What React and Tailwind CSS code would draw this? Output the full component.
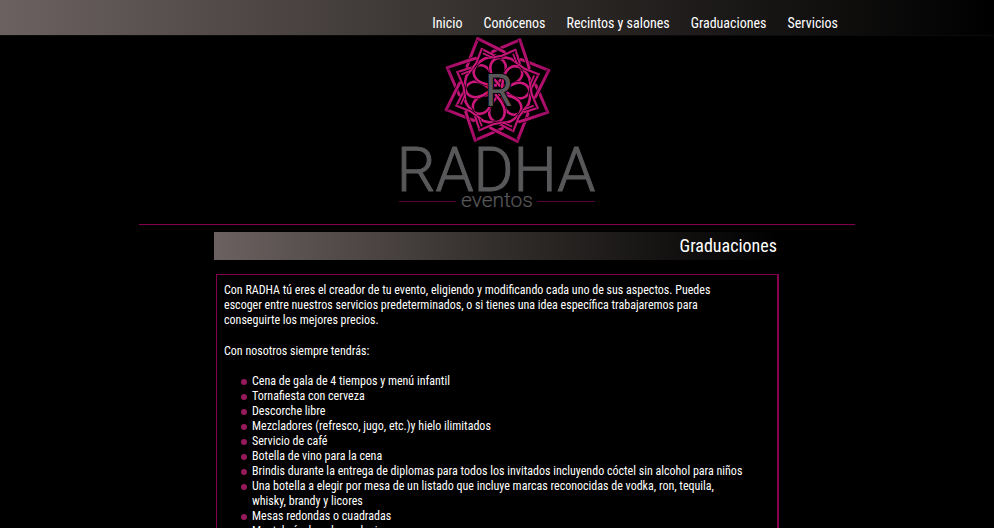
const nav = ["Inicio", "Conócenos", "Recintos y salones", "Graduaciones", "Servicios"];

const perks = [
  "Cena de gala de 4 tiempos y menú infantil",
  "Tornafiesta con cerveza",
  "Descorche libre",
  "Mezcladores (refresco, jugo, etc.)y hielo ilimitados",
  "Servicio de café",
  "Botella de vino para la cena",
  "Brindis durante la entrega de diplomas para todos los invitados incluyendo cóctel sin alcohol para niños",
  "Una botella a elegir por mesa de un listado que incluye marcas reconocidas de vodka, ron, tequila, whisky, brandy y licores",
  "Mesas redondas o cuadradas",
  "Mantelería de color a elegir",
];

const turns = [24, 69, 114, 159, 204, 249, 294, 339];

// Each ray of the knot has its point on the negative y axis and is mirrored across it.
const rim = "M0 -55 L15.6 -38 L20 -33";
const inner = "M0 -44 L10 -33 L16 -29";
const chevron = "M0 -39 L5 -34";
const petal = "M0 -34 C10 -33 17 -28 16.500 -21 C16 -13 7 -8 0 -5";

function Strand({ d, width, mirrored }) {
  return turns.map((t) => (
    <g key={t} transform={mirrored ? `rotate(${t}) scale(-1 1)` : `rotate(${t})`}>
      <path d={d} stroke="#000" strokeWidth={width + 1.2} strokeLinecap="butt" />
      <path d={d} stroke="url(#magenta)" strokeWidth={width} />
    </g>
  ));
}

function Logo() {
  return (
    <svg viewBox="0 0 200 180" className="h-[180px] w-[200px]" role="img" aria-label="Radha eventos">
      <defs>
        <radialGradient id="magenta" gradientUnits="userSpaceOnUse" cx="0" cy="0" r="57">
          <stop offset="0" stopColor="#d6187f" />
          <stop offset="0.6" stopColor="#c8167a" />
          <stop offset="1" stopColor="#98095f" />
        </radialGradient>
      </defs>
      <g transform="translate(100.5 54)" fill="none" strokeLinecap="round">
        <Strand d={petal} width={2.6} />
        <Strand d={petal} width={2.6} mirrored />
        <Strand d={chevron} width={1.8} />
        <Strand d={inner} width={2.2} />
        <Strand d={inner} width={2.2} mirrored />
        <Strand d={rim} width={3} mirrored />
        <Strand d={rim} width={3} />
      </g>
      <g fill="#58585a" stroke="#58585a" fontFamily="Roboto, sans-serif">
        <text x="88" y="70" fontSize="44" stroke="#000" strokeWidth="2" paintOrder="stroke">R</text>
        <text x="99" y="155" fontSize="61" fontWeight="300" textAnchor="middle">RADHA</text>
        <text x="100" y="171" fontSize="21" fontWeight="300" strokeWidth="0.2" textAnchor="middle">eventos</text>
      </g>
      <path d="M2 165.500H59M140 165.500H198" stroke="#5a0038" />
    </svg>
  );
}

export default function App() {
  return (
    <div className="min-h-screen bg-black font-['Roboto_Condensed',Roboto,sans-serif] text-white">
      <header className="h-9 border-b border-[#0c0b0b] bg-linear-to-r/srgb from-[#6b6160] via-[#322e2c] via-50% to-black">
        <nav className="mx-auto flex max-w-[716px] justify-end gap-[21px] pr-[17px] pt-[14px] text-sm leading-[18px]">
          {nav.map((item) => (
            <a key={item} href="#">{item}</a>
          ))}
        </nav>
      </header>
      <main className="mx-auto max-w-[716px]">
        <div className="flex h-[189px] justify-center border-b border-[#85004f]">
          <Logo />
        </div>
        <section className="mx-auto mt-[7px] max-w-[566px]">
          <h1 className="bg-linear-to-r/srgb from-[#6b6160] via-[#322e2c] via-50% to-black pr-[3px] text-right text-lg leading-7">
            Graduaciones
          </h1>
          <div className="ml-[2px] mr-px mt-[14px] border border-r-2 border-[#85004f] pb-2 pl-[7px] pr-7 pt-2 text-xs leading-[15px]">
            <p>
              Con RADHA tú eres el creador de tu evento, eligiendo y modificando cada uno de sus aspectos. Puedes
              escoger entre nuestros servicios predeterminados, o si tienes una idea específica trabajaremos para
              conseguirte los mejores precios.
            </p>
            <p className="mt-4">Con nosotros siempre tendrás:</p>
            <ul className="mt-[15px] pl-[17px]">
              {perks.map((perk) => (
                <li
                  key={perk}
                  className="flex gap-[5px] before:mt-[5px] before:size-[6px] before:shrink-0 before:rounded-full before:bg-[#95195b]"
                >
                  {perk}
                </li>
              ))}
            </ul>
          </div>
        </section>
      </main>
    </div>
  );
}
